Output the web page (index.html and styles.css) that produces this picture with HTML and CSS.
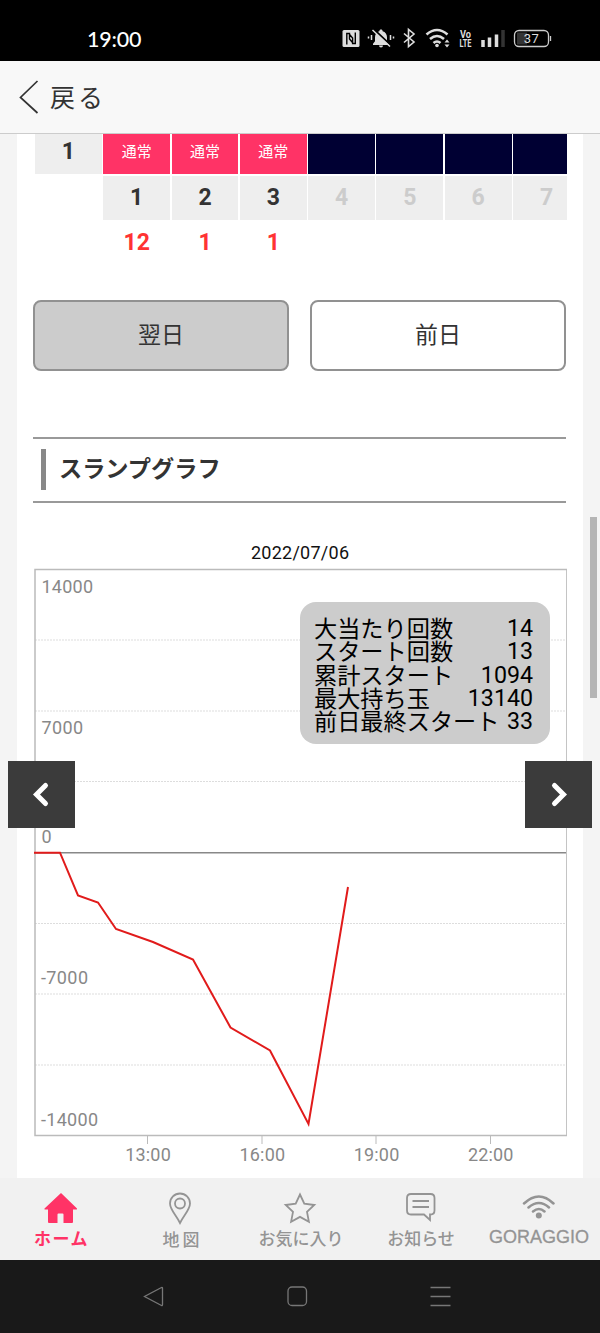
FILE: index.html
```html
<!DOCTYPE html>
<html lang="ja">
<head>
  <meta charset="UTF-8">
  <meta name="viewport" content="width=device-width, initial-scale=1.0">
  <title>スランプグラフ</title>
  <link rel="stylesheet" href="styles.css">
</head>
<body>
  <div class="status-bar">
    <span class="clock">19:00</span>
    <svg class="status-icons" width="212" height="24" viewBox="340 26 212 24">
      <!-- nfc -->
      <rect x="342.500" y="30" width="17" height="17" rx="1.500" fill="#ddd"/>
      <path d="M346.800 44.500V33.500h2.700v5.500l3 3.500M355.300 32.500V43.500h-2.700V38l-3-3.500" fill="none" stroke="#000" stroke-width="1.400"/>
      <!-- silent -->
      <path d="M381 29.500c-1 0-1.600.7-1.600 1.700-2.800.8-4.400 3-4.400 6v4l-2 2.500V45h16v-1.300l-2-2.500v-4c0-3-1.600-5.200-4.400-6 0-1-.6-1.700-1.600-1.700zM379 45.500h4a2 2 0 0 1-4 0z" fill="#ddd"/>
      <path d="M373.500 29l17 16" stroke="#000" stroke-width="1.800"/>
      <path d="M372.500 30l17.500 16.500M371.500 35v5M368.500 36.500v2M390.500 35v5M393.500 36.500v2" stroke="#ddd" stroke-width="1.500"/>
      <!-- bluetooth -->
      <path d="M404 33.500l10 8.500-5.500 4.500V29.500L414 34l-10 8.500" fill="none" stroke="#ddd" stroke-width="1.600"/>
      <!-- wifi -->
      <path d="M426.500 34.500q10.500-9 21 0M430 39q7-6 14 0M433.500 43q3.500-3 7 0" fill="none" stroke="#ddd" stroke-width="2.600"/>
      <circle cx="437" cy="45.500" r="1.800" fill="#ddd"/>
      <path d="M444.500 42.500l2.500-3 2.500 3zM444.500 44.500l2.500 3 2.500-3z" fill="#ddd"/>
      <!-- volte -->
      <text x="465.500" y="37.500" class="volte" textLength="11" lengthAdjust="spacingAndGlyphs">Vo</text>
      <text x="465.500" y="46.500" class="volte" textLength="12" lengthAdjust="spacingAndGlyphs">LTE</text>
      <!-- signal -->
      <path d="M483 47v-7M489.500 47v-9.500M496.500 47v-12.500" stroke="#ddd" stroke-width="3.500"/>
      <path d="M503 47V30" stroke="#333" stroke-width="3.500"/>
      <!-- battery -->
      <rect x="517" y="32.500" width="10" height="12" fill="#333"/>
      <rect x="514.500" y="30.500" width="34" height="16" rx="4.500" fill="none" stroke="#ccc" stroke-width="1.300"/>
      <path d="M550.500 36v5" stroke="#ccc" stroke-width="1.300"/>
      <text x="531.500" y="43.300" class="battery">37</text>
    </svg>
  </div>

  <header class="header">
    <svg width="22" height="36" viewBox="0 0 22 36">
      <path d="M18.500 2L1.500 18.500L18.500 34" fill="none" stroke="#333" stroke-width="1.700"/>
    </svg>
    <span class="back">戻る</span>
  </header>

  <main class="content">
    <section class="history">
      <div class="row row-type">
        <div class="cell head">1</div>
        <div class="cell hit">通常</div>
        <div class="cell hit">通常</div>
        <div class="cell hit">通常</div>
        <div class="cell empty"></div>
        <div class="cell empty"></div>
        <div class="cell empty"></div>
        <div class="cell empty"></div>
      </div>
      <div class="row row-number">
        <div class="cell"></div>
        <div class="cell num">1</div>
        <div class="cell num">2</div>
        <div class="cell num">3</div>
        <div class="cell num off">4</div>
        <div class="cell num off">5</div>
        <div class="cell num off">6</div>
        <div class="cell num off">7</div>
      </div>
      <div class="row row-count">
        <div class="cell"></div>
        <div class="cell">12</div>
        <div class="cell">1</div>
        <div class="cell">1</div>
      </div>
    </section>

    <div class="buttons">
      <button class="day-button disabled">翌日</button>
      <button class="day-button">前日</button>
    </div>

    <h2 class="title"><span class="title-text">スランプグラフ</span></h2>

    <section class="chart">
      <svg class="graph" width="566" height="638" viewBox="17 540 566 638">
        <text x="300" y="559" class="date" textLength="98">2022/07/06</text>
        <g class="grid">
          <path d="M35 640h531M35 711h531M35 781.500h531M35 923.500h531M35 994h531M35 1065h531"/>
        </g>
        <path d="M566.500 569v567" stroke="#c4c4c4" stroke-width="1"/>
        <path d="M567 569.500H35V1135.500H567" fill="none" stroke="#bbb" stroke-width="1.500"/>
        <path d="M147.500 1136v8M262 1136v8M376 1136v8M490.500 1136v8" stroke="#bbb" stroke-width="1"/>
        <path d="M34 852.700H566" stroke="#888" stroke-width="1.500"/>
        <polyline class="slump" points="34,852.700 60,852.700 78,895.500 98,902.500 116,929 153,942 193,959.500 230.500,1027.500 270,1050.500 308.500,1124 348,887"/>
        <g class="axis">
          <text x="41.500" y="592.500" textLength="51.500">14000</text>
          <text x="41.500" y="734" textLength="41.500">7000</text>
          <text x="41.500" y="842.500">0</text>
          <text x="41" y="984" textLength="47">-7000</text>
          <text x="41" y="1126" textLength="57">-14000</text>
        </g>
        <g class="axis time">
          <text x="148" y="1160.500" textLength="45.500">13:00</text>
          <text x="262.300" y="1160.500" textLength="45.500">16:00</text>
          <text x="376.500" y="1160.500" textLength="45.500">19:00</text>
          <text x="490.700" y="1160.500" textLength="45.500">22:00</text>
        </g>
      </svg>
      <dl class="summary">
        <div class="item"><dt>大当たり回数</dt><dd>14</dd></div>
        <div class="item"><dt>スタート回数</dt><dd>13</dd></div>
        <div class="item"><dt>累計スタート</dt><dd>1094</dd></div>
        <div class="item"><dt>最大持ち玉</dt><dd>13140</dd></div>
        <div class="item"><dt>前日最終スタート</dt><dd>33</dd></div>
      </dl>
      <button class="arrow prev">
        <svg width="20" height="28" viewBox="0 0 20 28"><path d="M13.500 4.500L4.500 13.500l9 9" /></svg>
      </button>
      <button class="arrow next">
        <svg width="20" height="28" viewBox="0 0 20 28"><path d="M5.500 4.500L14.500 13.500l-9 9" /></svg>
      </button>
    </section>
    <div class="scrollbar"></div>
  </main>

  <nav class="tabs">
    <a class="tab active">
      <svg width="36" height="34" viewBox="0 0 36 34">
        <path d="M19 1L2.500 16.500q-.5 1 .5 1H6V30q0 1 1 1h8.500v-8.500q0-1 1-1h4q1 0 1 1V31H30q1 0 1-1V17.500h3.500q1 0 .5-1z" fill="#ff3366"/>
      </svg>
      <span class="label home">ホーム</span>
    </a>
    <a class="tab">
      <svg width="36" height="34" viewBox="0 0 36 34">
        <path d="M18 31C14 23 8 17.500 8 11.500a10 10 0 0 1 20 0C28 17.500 22 23 18 31z"/>
        <circle cx="18" cy="11.500" r="5"/>
      </svg>
      <span class="label map">地図</span>
    </a>
    <a class="tab">
      <svg width="36" height="34" viewBox="0 0 36 34">
        <path d="M18 2.500l4.300 9.200 10 1.300-7.300 6.900 1.900 9.900-8.900-4.900-8.900 4.900 1.900-9.900-7.300-6.900 10-1.300z"/>
      </svg>
      <span class="label favorite">お気に入り</span>
    </a>
    <a class="tab">
      <svg width="36" height="34" viewBox="0 0 36 34">
        <path d="M9 2h19.500q4 0 4 4v12.500q0 4-4 4h-.5v5.500l-6-5.500H9q-4 0-4-4V6q0-4 4-4zM10.500 9h16.500M10.500 15h16.500"/>
      </svg>
      <span class="label notice">お知らせ</span>
    </a>
    <a class="tab">
      <svg width="36" height="34" viewBox="0 0 36 34">
        <path d="M2 11.500q15-14 29.500 0M6.500 15.500q10.500-9 20.500 0M11 19.500q6-5 11.500 0" stroke-width="2.500" stroke-linecap="round"/>
        <circle cx="16.800" cy="23.500" r="3" fill="#949494" stroke="none"/>
      </svg>
      <span class="label brand">GORAGGIO</span>
    </a>
  </nav>

  <div class="system-nav">
    <svg width="600" height="73" viewBox="0 0 600 73">
      <path d="M161.500 27.500L144.500 36.500L161.500 45.500q1 .5 1-1V28.500q0-1.500-1-1z"/>
      <rect x="288" y="27" width="18.500" height="18.500" rx="4"/>
      <path d="M430.500 27.500h20M430.500 36.500h20M430.500 45.500h20"/>
    </svg>
  </div>
</body>
</html>
```
FILE: styles.css
```css
* {
  margin: 0;
  padding: 0;
  box-sizing: border-box;
}

body {
  width: 600px;
  height: 1333px;
  overflow: hidden;
  display: flex;
  flex-direction: column;
  background: #f4f4f4;
  color: #333;
  font-family: Roboto, "Noto Sans CJK JP", sans-serif;
}

.status-bar {
  height: 61px;
  background: #000;
  display: flex;
  justify-content: space-between;
  padding: 26px 48px 0 87px;
}

.clock {
  font-family: Lato, sans-serif;
  font-size: 21.5px;
  font-weight: 500;
  line-height: 26px;
  letter-spacing: -0.2px;
  color: #fff;
}

.volte {
  font-size: 10px;
  font-weight: bold;
  text-anchor: middle;
  fill: #ddd;
}

.battery {
  font-size: 13px;
  letter-spacing: 0.5px;
  text-anchor: middle;
  fill: #ddd;
}

.header {
  height: 73px;
  background: #f8f8f8;
  border-bottom: 1px solid #ccc;
  display: flex;
  align-items: center;
  padding-left: 19px;
}

.back {
  margin-left: 9px;
  padding-top: 3px;
  font-size: 25px;
  letter-spacing: 3px;
  line-height: 36px;
}

.content {
  position: relative;
  height: 1044px;
  margin: 0 17px;
  background: #fff;
}

.history {
  width: 532px;
  margin-left: 18px;
  overflow: hidden;
}

.row {
  display: flex;
  gap: 1.5px;
}

.cell {
  width: 66.8px;
  flex-shrink: 0;
  text-align: center;
  font-size: 23px;
  font-weight: bold;
}

.row-type {
  height: 41.5px;
}

.row-type .cell {
  height: 40px;
  line-height: 36px;
}

.head {
  background: #eee;
}

.row-type .hit {
  background: #ff3366;
  color: #fff;
  font-size: 15px;
  font-weight: normal;
}

.empty {
  background: #000033;
}

.row-number .cell {
  height: 44.5px;
  line-height: 44px;
}

.num {
  background: #eee;
}

.off {
  color: #ccc;
}

.row-count {
  height: 44px;
  color: #f33;
}

.row-count .cell {
  line-height: 46px;
}

.buttons {
  display: flex;
  gap: 21px;
  margin: 36px 17px 0 16px;
}

.day-button {
  flex: 1;
  height: 71px;
  padding-bottom: 6px;
  border: 2px solid #919191;
  border-radius: 8px;
  background: #fff;
  color: #333;
  font-family: inherit;
  font-size: 23px;
}

.disabled {
  background: #ccc;
}

.title {
  height: 66px;
  margin: 66px 17px 0 16px;
  padding: 10px 8px;
  border-top: 2px solid #999;
  border-bottom: 2px solid #999;
}

.title-text {
  display: block;
  height: 41px;
  border-left: 5px solid #888;
  padding-left: 13px;
  font-size: 23.2px;
  line-height: 40px;
}

.chart {
  position: relative;
  height: 638px;
  margin-top: 37px;
}

.graph {
  display: block;
}

.date {
  font-size: 18px;
  text-anchor: middle;
  fill: #111;
}

.grid {
  stroke: #ddd;
  stroke-width: 1;
  stroke-dasharray: 2 1;
}

.axis {
  font-size: 18px;
  fill: #888;
}

.time {
  text-anchor: middle;
}

.slump {
  fill: none;
  stroke: #e11b1b;
  stroke-width: 2;
}

.summary {
  position: absolute;
  top: 62px;
  left: 283px;
  width: 250px;
  height: 142px;
  padding: 14px 17px 0 14px;
  border-radius: 16px;
  background: #ccc;
  color: #000;
  font-size: 23.2px;
}

.item {
  display: flex;
  justify-content: space-between;
  height: 23.3px;
  line-height: 25px;
  white-space: nowrap;
}

.item dt {
  padding-top: 1px;
}

.arrow {
  position: absolute;
  top: 221px;
  width: 67px;
  height: 67px;
  border: none;
  background: #3b3b3b;
  display: flex;
  align-items: center;
  justify-content: center;
}

.arrow path {
  fill: none;
  stroke: #fff;
  stroke-width: 5;
  stroke-linecap: round;
}

.prev {
  left: -9px;
}

.next {
  right: -9px;
}

.scrollbar {
  position: absolute;
  top: 383px;
  right: -14px;
  width: 7px;
  height: 181px;
  background: #b5b5b5;
}

.tabs {
  height: 82px;
  background: #f1f1f1;
  display: flex;
}

.tab {
  width: 120px;
  padding-top: 14px;
  display: flex;
  flex-direction: column;
  align-items: center;
  color: #949494;
}

.tab svg {
  flex-shrink: 0;
  fill: none;
  stroke: #949494;
  stroke-width: 1.8;
}

.tab.active svg {
  stroke: none;
}

.label {
  font-size: 17px;
  font-weight: 500;
  line-height: 26px;
  white-space: nowrap;
}

.active {
  color: #ff3366;
}

.home {
  padding-left: 3px;
  font-weight: bold;
  letter-spacing: 1.5px;
}

.map {
  padding-left: 5px;
  line-height: 28px;
  letter-spacing: 3px;
}

.favorite {
  padding-left: 2px;
}

.notice {
  padding-left: 2px;
}

.brand {
  font-family: "Liberation Sans", sans-serif;
  font-size: 18px;
  line-height: 23px;
  margin-left: -2px;
  -webkit-text-stroke: 0.3px #949494;
}

.system-nav {
  height: 73px;
  background: #191919;
}

.system-nav svg {
  display: block;
  fill: none;
  stroke: #777;
  stroke-width: 1.3;
}
```
